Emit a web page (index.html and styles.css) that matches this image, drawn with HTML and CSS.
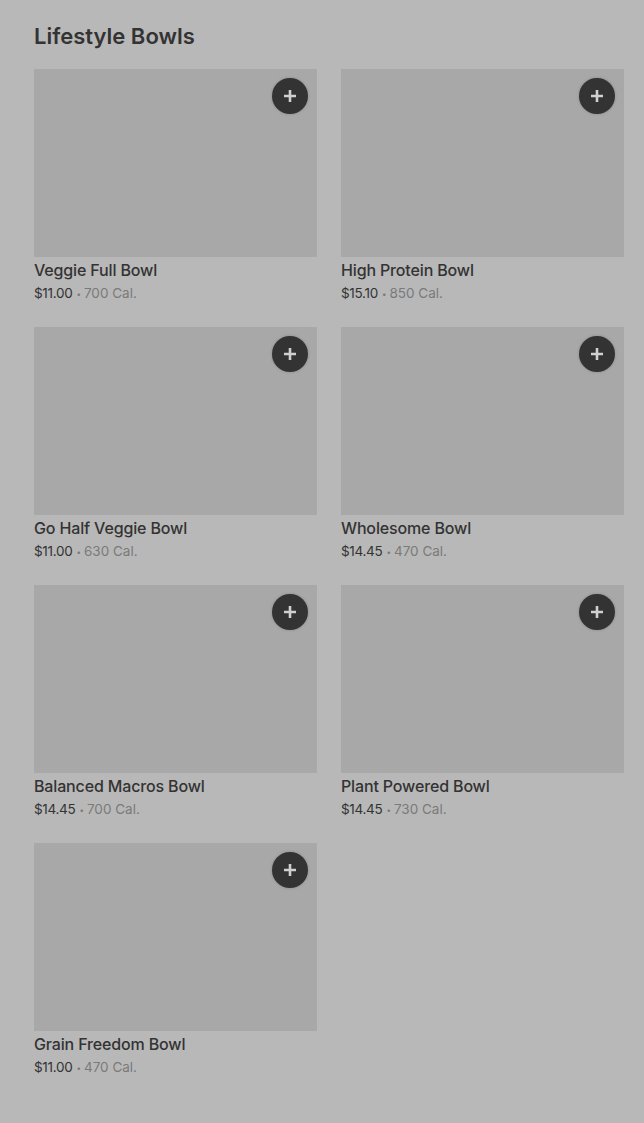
FILE: index.html
```html
<!DOCTYPE html>
<html lang="en">
<head>
    <meta charset="UTF-8">
    <meta name="viewport" content="width=device-width, initial-scale=1.0">
    <title>Lifestyle Bowls</title>
    <link rel="stylesheet" href="styles.css">
</head>
<body>

    <section class="menu">
        <h2 class="menu-title">Lifestyle Bowls</h2>

        <div class="items">
            <div class="item">
                <div class="photo"><button class="add"><svg viewBox="0 0 12 12"><path d="M6 0v12M0 6h12"/></svg></button></div>
                <div class="name">Veggie Full Bowl</div>
                <div class="meta"><span class="price">$11.00</span><span class="dot">•</span>700 Cal.</div>
            </div>
            <div class="item">
                <div class="photo"><button class="add"><svg viewBox="0 0 12 12"><path d="M6 0v12M0 6h12"/></svg></button></div>
                <div class="name">High Protein Bowl</div>
                <div class="meta"><span class="price">$15.10</span><span class="dot">•</span>850 Cal.</div>
            </div>
            <div class="item">
                <div class="photo"><button class="add"><svg viewBox="0 0 12 12"><path d="M6 0v12M0 6h12"/></svg></button></div>
                <div class="name">Go Half Veggie Bowl</div>
                <div class="meta"><span class="price">$11.00</span><span class="dot">•</span>630 Cal.</div>
            </div>
            <div class="item">
                <div class="photo"><button class="add"><svg viewBox="0 0 12 12"><path d="M6 0v12M0 6h12"/></svg></button></div>
                <div class="name">Wholesome Bowl</div>
                <div class="meta"><span class="price">$14.45</span><span class="dot">•</span>470 Cal.</div>
            </div>
            <div class="item">
                <div class="photo"><button class="add"><svg viewBox="0 0 12 12"><path d="M6 0v12M0 6h12"/></svg></button></div>
                <div class="name">Balanced Macros Bowl</div>
                <div class="meta"><span class="price">$14.45</span><span class="dot">•</span>700 Cal.</div>
            </div>
            <div class="item">
                <div class="photo"><button class="add"><svg viewBox="0 0 12 12"><path d="M6 0v12M0 6h12"/></svg></button></div>
                <div class="name">Plant Powered Bowl</div>
                <div class="meta"><span class="price">$14.45</span><span class="dot">•</span>730 Cal.</div>
            </div>
            <div class="item">
                <div class="photo"><button class="add"><svg viewBox="0 0 12 12"><path d="M6 0v12M0 6h12"/></svg></button></div>
                <div class="name">Grain Freedom Bowl</div>
                <div class="meta"><span class="price">$11.00</span><span class="dot">•</span>470 Cal.</div>
            </div>
        </div>
    </section>

    <section class="menu">
        <h2 class="menu-title next">Salads</h2>
    </section>

</body>
</html>
```

FILE: styles.css
```css
body {
    background: #b8b8b8;
    font-family: Inter, "Noto Sans", sans-serif;
    color: #333;
    margin: 0;
    padding: 0;
}

.menu {
    padding: 0 20px 0 34px;
}

.menu-title {
    margin: 0;
    padding-top: 22px;
    height: 69px;
    box-sizing: border-box;
    font-size: 22px;
    line-height: 28px;
    font-weight: 600;
    letter-spacing: 0;
    color: #333;
}

.menu-title.next {
    padding-top: 42px;
    color: #9a9a9a;
}

.items {
    display: grid;
    grid-template-columns: 283px 283px;
    column-gap: 24px;
    row-gap: 24px;
}

.photo {
    position: relative;
    height: 188px;
    background: #a8a8a8;
}

.add {
    position: absolute;
    top: 9px;
    right: 9px;
    display: flex;
    align-items: center;
    justify-content: center;
    width: 36px;
    height: 36px;
    padding: 0;
    border: none;
    border-radius: 50%;
    background: #333;
    box-shadow: 0 0 3px rgba(0,0,0,0.2);
}

.add svg {
    width: 12px;
    height: 12px;
    stroke: #d0d0d0;
    stroke-width: 2.6;
    fill: none;
}

.name {
    margin-top: 2px;
    font-size: 16px;
    line-height: 22px;
    font-weight: 500;
    letter-spacing: -0.15px;
    color: #333;
}

.meta {
    margin-top: 2px;
    height: 20px;
    font-size: 13.5px;
    line-height: 20px;
    color: #7a7a7a;
}

.price {
    color: #333;
    letter-spacing: -0.3px;
}

.dot {
    display: inline-block;
    margin: 0 3px 0 4px;
    font-size: 8px;
    line-height: 1;
    vertical-align: 1px;
}
```
